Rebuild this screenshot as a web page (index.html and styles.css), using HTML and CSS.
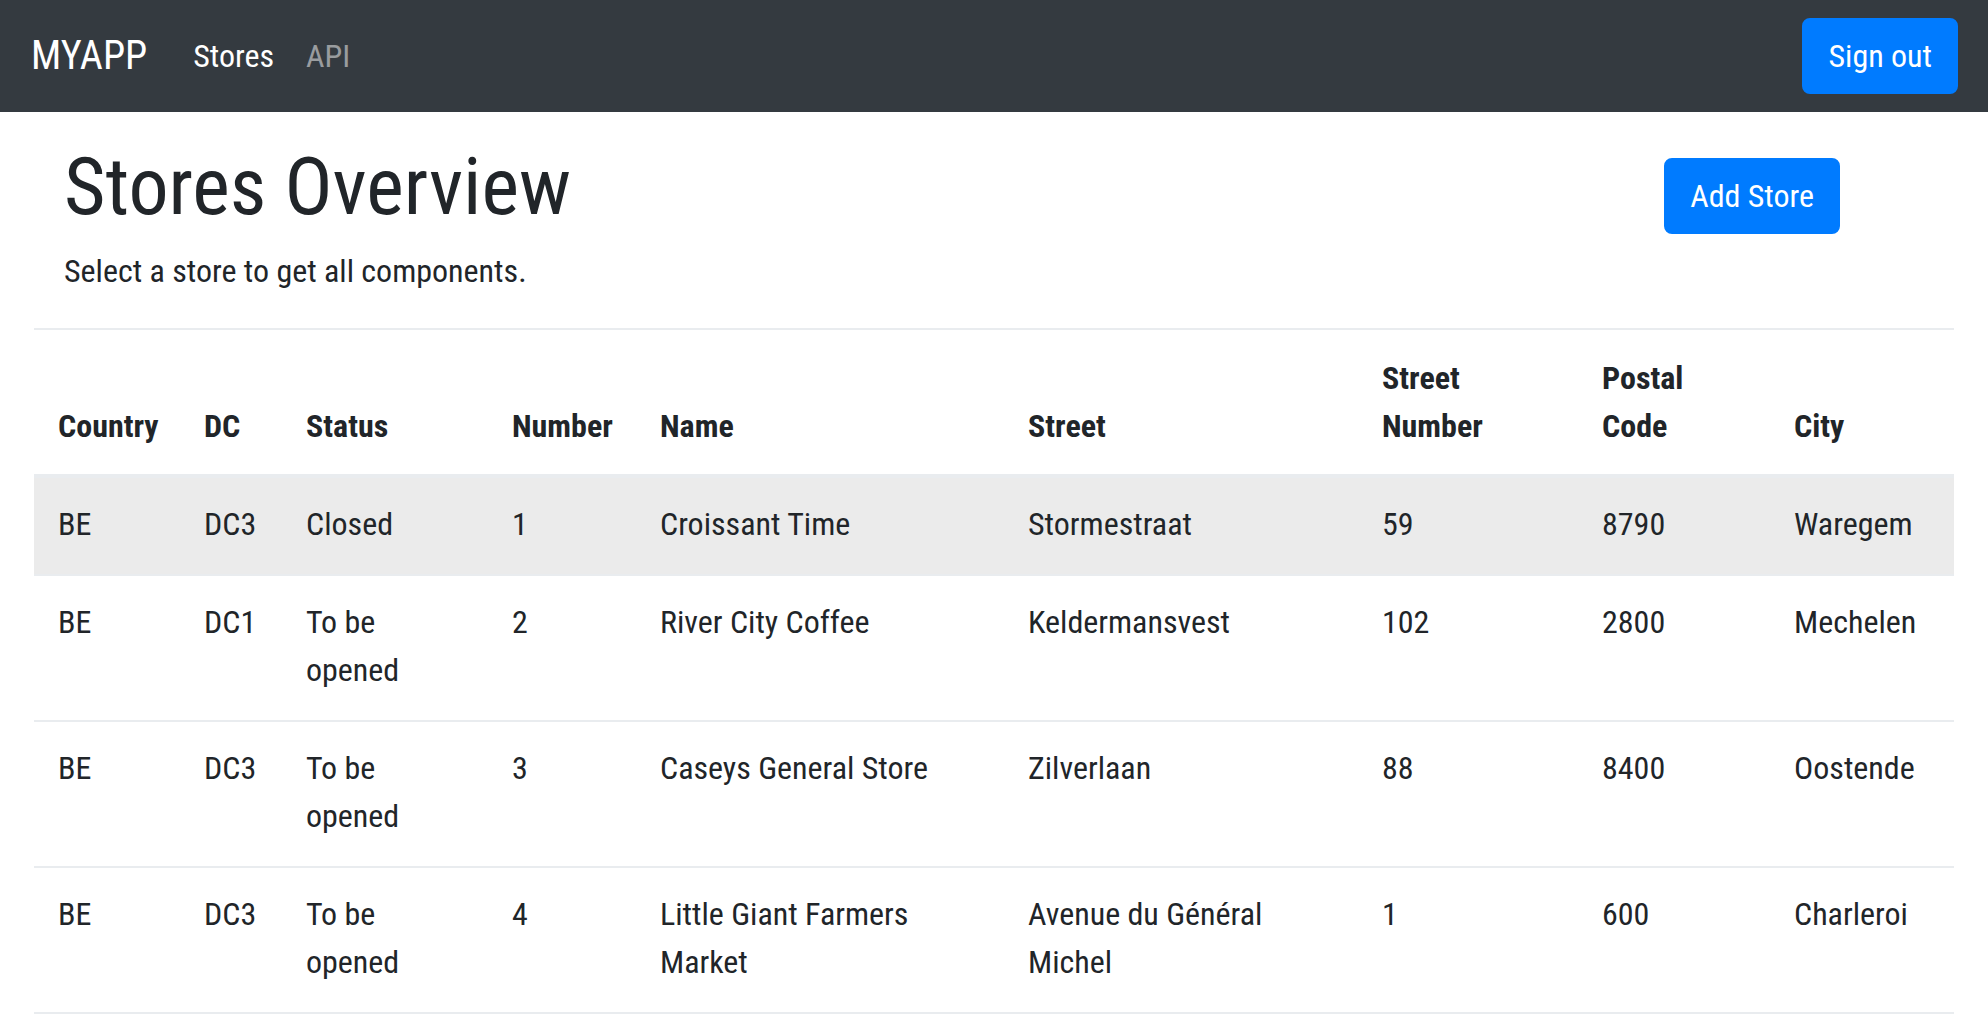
FILE: index.html
```html
<!DOCTYPE html>
<html lang="en">
<head>
<meta charset="utf-8">
<title>MYAPP - Stores</title>
<link rel="stylesheet" href="styles.css">
</head>
<body>
<nav class="navbar">
  <a class="brand" href="#">MYAPP</a>
  <ul class="nav-links">
    <li><a class="nav-link active" href="#">Stores</a></li>
    <li><a class="nav-link" href="#">API</a></li>
  </ul>
  <button class="btn btn-primary">Sign out</button>
</nav>
<main class="page">
  <header class="page-header">
    <div class="page-title">
      <h1>Stores Overview</h1>
      <p class="lead">Select a store to get all components.</p>
    </div>
    <button class="btn btn-primary add-btn">Add Store</button>
  </header>
  <table class="table">
    <colgroup>
      <col class="c-country"><col class="c-dc"><col class="c-status"><col class="c-number"><col class="c-name"><col class="c-street"><col class="c-streetnr"><col class="c-postal"><col class="c-city">
    </colgroup>
    <thead>
      <tr>
        <th>Country</th><th>DC</th><th>Status</th><th>Number</th><th>Name</th><th>Street</th><th>Street Number</th><th>Postal Code</th><th>City</th>
      </tr>
    </thead>
    <tbody>
      <tr class="hover">
        <td>BE</td><td>DC3</td><td>Closed</td><td>1</td><td>Croissant Time</td><td>Stormestraat</td><td>59</td><td>8790</td><td>Waregem</td>
      </tr>
      <tr>
        <td>BE</td><td>DC1</td><td>To be opened</td><td>2</td><td>River City Coffee</td><td>Keldermansvest</td><td>102</td><td>2800</td><td>Mechelen</td>
      </tr>
      <tr>
        <td>BE</td><td>DC3</td><td>To be opened</td><td>3</td><td>Caseys General Store</td><td>Zilverlaan</td><td>88</td><td>8400</td><td>Oostende</td>
      </tr>
      <tr>
        <td>BE</td><td>DC3</td><td>To be opened</td><td>4</td><td>Little Giant Farmers Market</td><td>Avenue du Général Michel</td><td>1</td><td>600</td><td>Charleroi</td>
      </tr>
    </tbody>
  </table>
</main>
</body>
</html>
```
FILE: styles.css
```css
* { box-sizing: border-box; }

html, body {
  margin: 0;
  padding: 0;
}

body {
  font-family: "Roboto Condensed", "Roboto", "Liberation Sans", sans-serif;
  font-size: 32px;
  line-height: 48px;
  color: #212529;
  background: #ffffff;
}

a { text-decoration: none; }

/* Navbar */
.navbar {
  height: 112px;
  background: #343a40;
  display: flex;
  align-items: center;
  padding: 0 30px 0 31px;
}

.brand {
  font-size: 40px;
  line-height: 60px;
  color: #ffffff;
  margin-right: 30px;
}

.nav-links {
  list-style: none;
  margin: 0;
  padding: 0;
  display: flex;
  flex: 1;
}

.nav-link {
  display: block;
  padding: 16px 16px;
  color: rgba(255, 255, 255, 0.5);
}

.nav-link.active {
  color: #ffffff;
}

/* Buttons */
.btn {
  font-family: inherit;
  font-size: 32px;
  line-height: 48px;
  padding: 12px 24px;
  border: 2px solid transparent;
  border-radius: 8px;
  cursor: pointer;
}

.btn-primary {
  background: #007bff;
  border-color: #007bff;
  color: #ffffff;
}

/* Page */
.page {
  padding: 0 34px;
}

.page-header {
  display: flex;
  justify-content: space-between;
  align-items: flex-start;
  padding: 27px 114px 0 30px;
}

.page-title h1 {
  margin: 0;
  font-size: 80px;
  line-height: 96px;
  font-weight: 400;
  color: #212529;
}

.lead {
  margin: 12px 0 33px;
}

.add-btn {
  margin-top: 19px;
}

/* Table */
.table {
  width: 100%;
  table-layout: fixed;
  border-collapse: separate;
  border-spacing: 0;
}

.c-country { width: 146px; }
.c-dc { width: 102px; }
.c-status { width: 206px; }
.c-number { width: 148px; }
.c-name { width: 368px; }
.c-street { width: 354px; }
.c-streetnr { width: 220px; }
.c-postal { width: 192px; }
.c-city { width: 184px; }

.table th,
.table td {
  padding: 22px 24px 26px;
  text-align: left;
  vertical-align: top;
  border-top: 2px solid #e9ecef;
}

.table th {
  padding: 24px;
  vertical-align: bottom;
  font-weight: 700;
  border-bottom: 2px solid #e9ecef;
}

.table tbody tr:last-child td {
  border-bottom: 2px solid #e9ecef;
}

.table tr.hover td {
  background: #ebebeb;
}
```
